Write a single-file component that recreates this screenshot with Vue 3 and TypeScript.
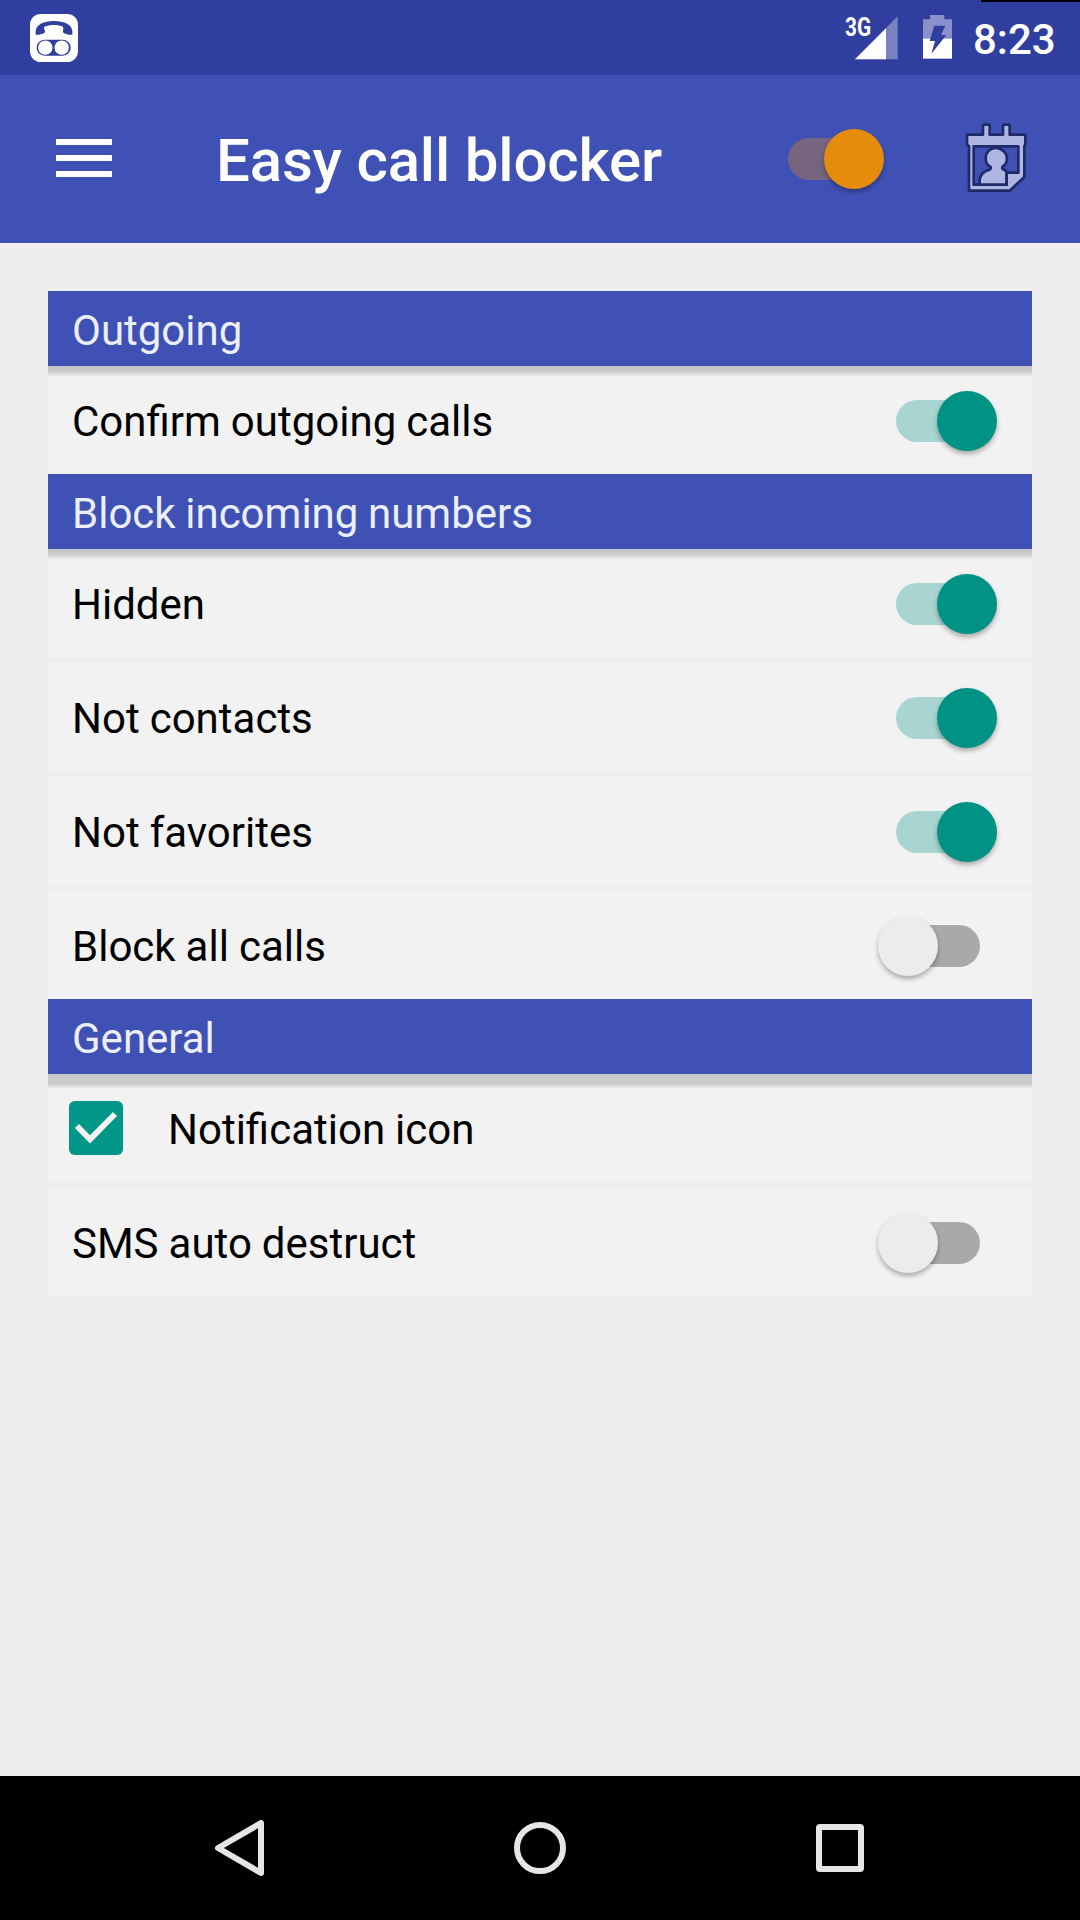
<script setup lang="ts">
import { ref } from 'vue'

interface Row {
  label: string
  kind: 'switch' | 'check'
  on: boolean
}
interface Section {
  title: string
  rows: Row[]
}

const enabled = ref(true)
const sections = ref<Section[]>([
  { title: 'Outgoing', rows: [{ label: 'Confirm outgoing calls', kind: 'switch', on: true }] },
  {
    title: 'Block incoming numbers',
    rows: [
      { label: 'Hidden', kind: 'switch', on: true },
      { label: 'Not contacts', kind: 'switch', on: true },
      { label: 'Not favorites', kind: 'switch', on: true },
      { label: 'Block all calls', kind: 'switch', on: false },
    ],
  },
  {
    title: 'General',
    rows: [
      { label: 'Notification icon', kind: 'check', on: true },
      { label: 'SMS auto destruct', kind: 'switch', on: false },
    ],
  },
])
</script>

<template>
  <div class="screen">
    <div class="edge"></div>
    <header class="status">
      <svg class="app-icon" width="48" height="48" viewBox="0 0 144 144">
        <rect x="0" y="0" width="144" height="144" rx="32" fill="#fff" />
        <path d="M17 62 V50 C20 32 40 21 72 21 C104 21 124 32 127 50 V62 C118 63 110 61 101 57 C98 54 98 50 100 45 L99 38 C85 31 59 31 43 38 L42 45 C46 50 46 54 43 57 C34 61 26 63 17 62 Z" fill="#303f9f" />
        <rect x="20" y="77" width="102" height="48" rx="24" fill="#303f9f" />
        <circle cx="46" cy="101" r="21.5" fill="#fff" />
        <circle cx="95" cy="101" r="21.5" fill="#fff" />
      </svg>
      <div class="status-right">
        <span class="net">3G</span>
        <svg class="signal" width="43" height="44" viewBox="0 0 129 132">
          <path d="M0 130 L128 1 V130 Z" fill="#fff" opacity="0.35" />
          <path d="M0 130 L93 37 V130 Z" fill="#fff" />
        </svg>
        <svg class="battery" width="29" height="44" viewBox="0 0 87 132">
          <path d="M21 0 H64 V13 H87 V72 H0 V13 H21 Z" fill="#8990ca" />
          <rect x="0" y="71" width="87" height="60" fill="#fff" />
          <path d="M34 32 H67 L54 60 H70 L25 116 L36 78 H20 Z" fill="#303f9f" />
        </svg>
        <span class="clock">8:23</span>
      </div>
    </header>

    <div class="appbar">
      <div class="menu"><i></i><i></i><i></i></div>
      <h1>Easy call blocker</h1>
      <div class="main-switch" :class="{ on: enabled }" @click="enabled = !enabled">
        <span class="track"></span><span class="thumb"></span>
      </div>
      <svg class="contacts" width="66" height="75" viewBox="0 0 198 225">
        <g stroke="#1f2a68" stroke-width="8" stroke-linejoin="round">
          <path d="M12 44 H60 V17 Q60 14 63 14 H77 Q80 14 80 17 V44 H120 V17 Q120 14 123 14 H137 Q140 14 140 17 V44 H187 V74 L184 78 V171 L140 212 H18 V78 L12 74 Z" fill="#b0b6e2" />
          <path d="M32 79 H166 V158 H131 V194 H32 Z" fill="#3f51b5" />
          <path d="M50 194 V181 C50 166 62 152 80 149 C83 147 84 144 83 141 C74 137 68 127 68 115 C68 97 81 84 98 84 C115 84 132 97 132 115 C132 127 126 136 118 141 C116 145 119 148 126 150 L131 158 V194" fill="#b0b6e2" />
          <path d="M32 194 H131 V158" fill="none" />
        </g>
      </svg>
    </div>

    <main>
      <section v-for="s in sections" :key="s.title">
        <h2>{{ s.title }}</h2>
        <div class="rows">
          <div v-for="r in s.rows" :key="r.label" class="row" @click="r.on = !r.on">
            <svg v-if="r.kind === 'check'" class="check" width="54" height="54" viewBox="0 0 162 162">
              <rect width="162" height="162" rx="17" fill="#009688" />
              <path v-if="r.on" d="M24 75 L63 115 L138 39" fill="none" stroke="#f2f2f2" stroke-width="17" />
            </svg>
            <span class="label">{{ r.label }}</span>
            <div v-if="r.kind === 'switch'" class="switch" :class="{ on: r.on }">
              <span class="track"></span><span class="thumb"></span>
            </div>
          </div>
        </div>
      </section>
    </main>

    <nav>
      <svg width="60" height="64" viewBox="0 0 60 64">
        <path d="M8 32 L51 7 V57 Z" fill="none" stroke="#e6e6e6" stroke-width="6" stroke-linejoin="round" />
      </svg>
      <svg width="60" height="64" viewBox="0 0 60 64">
        <circle cx="30" cy="32" r="23" fill="none" stroke="#e6e6e6" stroke-width="6" />
      </svg>
      <svg width="60" height="64" viewBox="0 0 60 64">
        <rect x="9" y="11" width="42" height="42" rx="1" fill="none" stroke="#e6e6e6" stroke-width="6" />
      </svg>
    </nav>
  </div>
</template>

<style>
body {
  margin: 0;
  background: #eee;
}
</style>

<style scoped>
.screen {
  position: relative;
  width: 1080px;
  height: 1920px;
  display: flex;
  flex-direction: column;
  background: #eee;
  font-family: Roboto, 'Liberation Sans', sans-serif;
  overflow: hidden;
}
.edge {
  position: absolute;
  top: 0;
  right: 0;
  width: 99px;
  height: 2px;
  background: #000;
}
.status {
  height: 75px;
  flex: none;
  display: flex;
  align-items: flex-start;
  justify-content: space-between;
  background: #303f9f;
  color: #fff;
}
.app-icon {
  margin: 14px 0 0 30px;
}
.status-right {
  display: flex;
  align-items: flex-start;
  padding-right: 25px;
}
.net {
  width: 10px;
  margin-top: 12px;
  font-size: 26px;
  line-height: 30px;
  font-weight: 700;
  transform: scaleX(0.8);
  transform-origin: left;
}
.signal {
  margin-top: 16px;
}
.battery {
  margin: 15px 0 0 25px;
}
.clock {
  margin: 15px 0 0 21px;
  width: 82px;
  white-space: nowrap;
  font-size: 42px;
  line-height: 50px;
  font-weight: 500;
}
.appbar {
  height: 168px;
  flex: none;
  display: flex;
  align-items: center;
  background: #3f51b5;
  color: #fff;
}
.menu {
  width: 56px;
  margin: 0 104px 2px 56px;
  display: flex;
  flex-direction: column;
  gap: 10px;
}
.menu i {
  height: 6px;
  background: #fff;
}
h1 {
  margin: 0;
  padding-top: 4px;
  width: 572px;
  white-space: nowrap;
  font-size: 60px;
  line-height: 70px;
  font-weight: 500;
  letter-spacing: -0.18px;
}
.main-switch,
.switch {
  flex: none;
  display: grid;
  align-items: center;
  height: 60px;
}
.main-switch > *,
.switch > * {
  grid-area: 1 / 1;
}
.track {
  height: 42px;
  width: 84px;
  border-radius: 21px;
  background: #a9a9a9;
}
.thumb {
  height: 60px;
  width: 60px;
  border-radius: 50%;
  background: #ececec;
  box-shadow: 0 3px 5px rgba(0, 0, 0, 0.3);
}
.main-switch {
  width: 96px;
  margin-bottom: 1px;
}
.main-switch.on .track {
  background: #77657f;
}
.main-switch.on .thumb {
  background: #e58c0c;
  margin-left: 35.5px;
}
.contacts {
  margin: 0 0 3px 79px;
}
main {
  flex: 1;
  padding: 48px 48px 0;
}
h2 {
  margin: 0;
  height: 75px;
  box-sizing: border-box;
  padding: 15px 24px 0;
  font-size: 42px;
  line-height: 50px;
  font-weight: 400;
  color: #ebeefb;
  word-spacing: -0.8px;
  background: #3f51b5;
}
.rows {
  display: flex;
  flex-direction: column;
  gap: 6px;
}
.row {
  height: 108px;
  box-sizing: border-box;
  display: flex;
  align-items: center;
  padding: 0 34px 0 24px;
  background: #f2f2f2;
}
.row:first-child {
  background: linear-gradient(#c2c2c4 0, #cbcbcb 5px, #f2f2f2 11px);
}
section:last-child .row:first-child {
  background: linear-gradient(#c8c8ca 0, #cdcdcd 10px, #f2f2f2 15px);
}
.label {
  flex: 1;
  padding-top: 4px;
  font-size: 42px;
  line-height: 50px;
  word-spacing: -0.4px;
  color: #000;
}
.check {
  margin: 0 45px 0 -3px;
}
.switch {
  width: 120px;
}
.switch .track {
  margin: 1px 0 0 18px;
}
.switch .thumb {
  margin: 1px 0 0 0.4px;
}
.switch.on .thumb {
  background: #009385;
  margin-left: 59.4px;
}
.switch.on .track {
  background: #a8d5d1;
}
nav {
  height: 144px;
  flex: none;
  display: flex;
  align-items: center;
  justify-content: center;
  gap: 240px;
  background: #000;
}
</style>
